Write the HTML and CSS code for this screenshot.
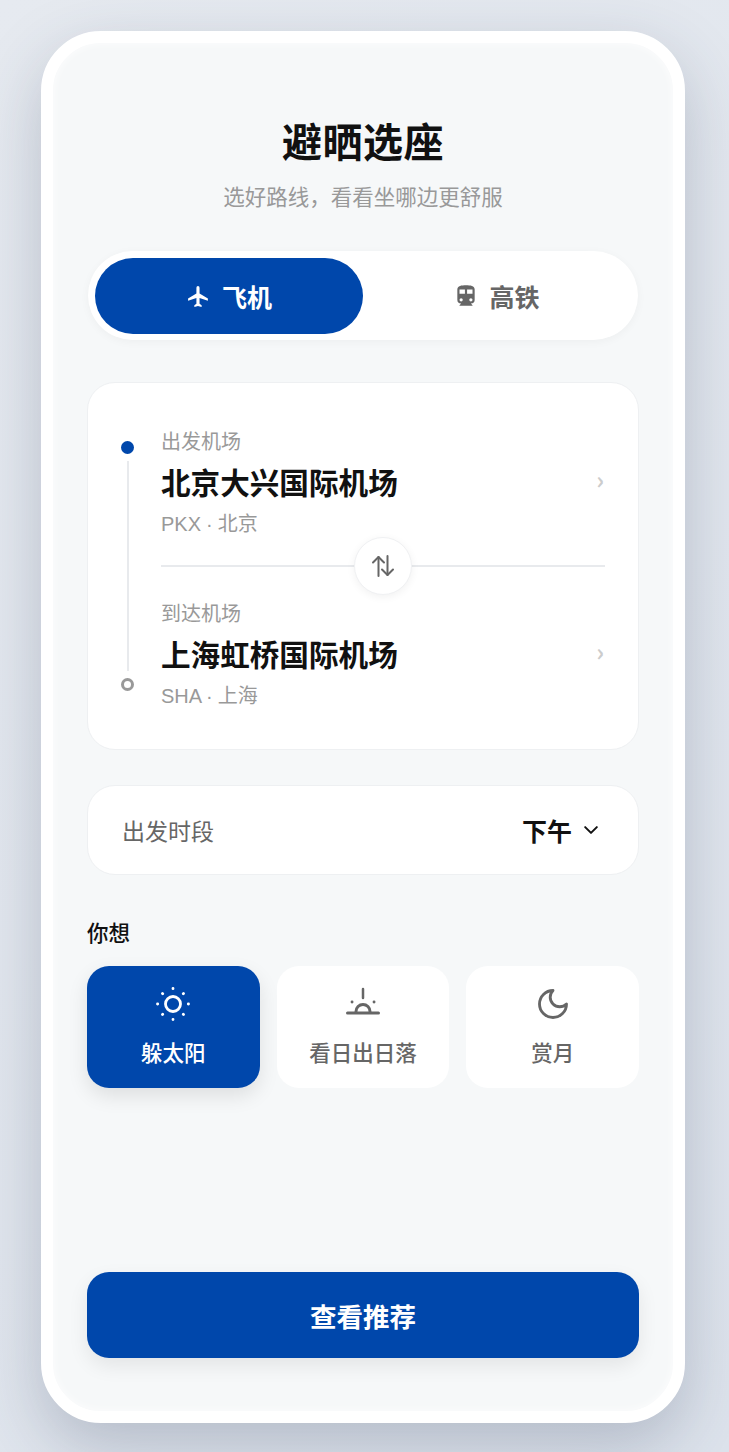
FILE: index.html
```html
<!DOCTYPE html>
<html lang="zh">
<head>
    <meta charset="UTF-8">
    <title>避晒选座</title>
    <link rel="stylesheet" href="styles.css">
</head>
<body>
    <div class="phone">
        <h1 class="title">避晒选座</h1>
        <p class="subtitle">选好路线，看看坐哪边更舒服</p>

        <div class="tabs">
            <div class="tab tab-active">
                <svg class="tab-icon" viewBox="0 0 24 24" fill="currentColor"><path d="M21 16v-2l-8-5V3.500a1.500 1.500 0 0 0-3 0V9l-8 5v2l8-2.500V19l-2 1.500V22l3.500-1 3.500 1v-1.500L13 19v-5.500z"/></svg>
                <span>飞机</span>
            </div>
            <div class="tab">
                <svg class="tab-icon tab-icon-train" viewBox="0 0 24 24" fill="currentColor"><path d="M12 2C8 2 4 2.500 4 6v9.500A3.500 3.500 0 0 0 7.500 19L6 20.500v.5h12v-.5L16.500 19a3.500 3.500 0 0 0 3.500-3.500V6c0-3.500-4-4-8-4zM7.500 17a1.500 1.500 0 1 1 0-3 1.500 1.500 0 0 1 0 3zM11 10H6V6h5zm2 0V6h5v4zm3.500 7a1.500 1.500 0 1 1 0-3 1.500 1.500 0 0 1 0 3z"/></svg>
                <span>高铁</span>
            </div>
        </div>

        <div class="route card">
            <div class="rail">
                <span class="dot dot-from"></span>
                <span class="rail-line"></span>
                <span class="dot dot-to"></span>
            </div>
            <div class="stops">
                <div class="stop">
                    <div class="stop-info">
                        <div class="stop-label">出发机场</div>
                        <div class="stop-name">北京大兴国际机场</div>
                        <div class="stop-code">PKX · 北京</div>
                    </div>
                    <span class="stop-arrow">›</span>
                </div>
                <div class="stop-divider">
                    <button class="swap">
                        <svg viewBox="0 0 24 24" fill="none" stroke="currentColor" stroke-width="2" stroke-linecap="round" stroke-linejoin="round"><path d="M7.500 22V3"/><path d="M2 8.500l5.500-5.500 5.500 5.500"/><path d="M16.500 2v19"/><path d="M11 15.500l5.500 5.500 5.500-5.500"/></svg>
                    </button>
                </div>
                <div class="stop">
                    <div class="stop-info">
                        <div class="stop-label">到达机场</div>
                        <div class="stop-name">上海虹桥国际机场</div>
                        <div class="stop-code">SHA · 上海</div>
                    </div>
                    <span class="stop-arrow">›</span>
                </div>
            </div>
        </div>

        <div class="time card">
            <span class="time-label">出发时段</span>
            <span class="time-value">下午
                <svg viewBox="0 0 24 24" fill="none" stroke="currentColor" stroke-width="2.400" stroke-linecap="round" stroke-linejoin="round"><path d="M5 8.500l7 7 7-7"/></svg>
            </span>
        </div>

        <div class="section-title">你想</div>
        <div class="options">
            <div class="option option-active">
                <svg viewBox="0 0 36 36" fill="none" stroke="currentColor" stroke-width="2.800" stroke-linecap="round"><circle cx="18" cy="18" r="7.500"/><path d="M18 2.500v.2M18 33.300v.2M2.500 18h.2M33.300 18h.2M7.500 7.500l.2.2M28.300 28.300l.2.2M7.500 28.500l.2-.2M28.300 7.700l.2-.2"/></svg>
                <span>躲太阳</span>
            </div>
            <div class="option">
                <svg viewBox="0 0 36 36" fill="none" stroke="currentColor" stroke-width="2.500" stroke-linecap="round"><path d="M18 3v9"/><path d="M2.500 27h31" stroke-width="3"/><path d="M11 25.500a7 7 0 0 1 14 0" stroke-width="3"/><path d="M7 16h.1M29 16h.1" stroke-width="2.800"/></svg>
                <span>看日出日落</span>
            </div>
            <div class="option">
                <svg viewBox="0 0 24 24" fill="none" stroke="currentColor" stroke-width="1.900" stroke-linecap="round" stroke-linejoin="round"><path d="M12 3a6 6 0 0 0 9 9 9 9 0 1 1-9-9z"/></svg>
                <span>赏月</span>
            </div>
        </div>

        <button class="submit">查看推荐</button>
    </div>
</body>
</html>
```

FILE: styles.css
```css
* {
    box-sizing: border-box;
}
body {
    margin: 0;
    height: 1452px;
    overflow: hidden;
    padding: 31px 44px 0 41px;
    background: linear-gradient(135deg, #e6eaf0, #dde3ec);
    font-family: "Liberation Sans", "Noto Sans CJK SC", sans-serif;
}
.phone {
    display: flex;
    flex-direction: column;
    width: 644px;
    height: 1392px;
    padding: 78px 34px 53px;
    background: #f6f8f9;
    border: 12px solid #fff;
    border-radius: 60px;
    box-shadow: 0 24px 64px rgba(50, 65, 90, 0.25), inset 0 0 10px rgba(255, 255, 255, 0.8);
}
.title {
    margin: 0;
    font-size: 40px;
    line-height: 44px;
    font-weight: 700;
    letter-spacing: 0.5px;
    text-align: center;
    color: #111;
}
.subtitle {
    margin: 19px 0 0;
    font-size: 21.5px;
    line-height: 28px;
    text-align: center;
    color: #999;
}
.tabs {
    display: flex;
    height: 89px;
    margin: 39px 1px 0;
    padding: 7px 7px 6px;
    background: #fff;
    border-radius: 45px;
    box-shadow: 0 2px 10px rgba(0, 0, 0, 0.04);
}
.tab {
    flex: 1;
    display: flex;
    align-items: center;
    justify-content: center;
    gap: 11px;
    border-radius: 38px;
    font-size: 25px;
    font-weight: 700;
    color: #666;
}
.tab-active {
    background: #0047ab;
    color: #fff;
}
.tab-icon {
    width: 25px;
    height: 25px;
}
.tab-icon-train {
    width: 26px;
    height: 26px;
    margin: 0 -1px;
}
.card {
    background: #fff;
    border: 1px solid #eef0f2;
    border-radius: 28px;
}
.route {
    display: flex;
    height: 368px;
    margin-top: 42px;
    padding: 44px 33px 0;
}
.rail {
    display: flex;
    flex-direction: column;
    align-items: center;
    width: 13px;
    height: 250px;
    margin-top: 14px;
    margin-right: 27px;
}
.dot {
    flex: none;
    width: 13px;
    height: 13px;
    border-radius: 50%;
}
.dot-from {
    background: #0047ab;
}
.dot-to {
    background: #fff;
    border: 3px solid #999;
}
.rail-line {
    flex: 1;
    width: 2px;
    margin: 7px 0;
    background: #e8eaed;
}
.stops {
    flex: 1;
}
.stop {
    display: flex;
    align-items: center;
    justify-content: space-between;
}
.stop-label {
    font-size: 20px;
    line-height: 30px;
    color: #999;
}
.stop-name {
    margin-top: 6px;
    font-size: 29.6px;
    line-height: 42px;
    font-weight: 700;
    color: #111;
}
.stop-code {
    margin-top: 5px;
    font-size: 20px;
    line-height: 28px;
    word-spacing: -0.5px;
    color: #999;
}
.stop-arrow {
    margin-right: 1px;
    margin-bottom: 8px;
    font-family: "Noto Sans CJK SC", sans-serif;
    font-size: 24px;
    font-weight: 700;
    color: #ccc;
}
.stop-divider {
    display: flex;
    align-items: center;
    justify-content: center;
    height: 2px;
    margin: 27px 0 32px;
    background: #e8eaed;
}
.swap {
    display: flex;
    align-items: center;
    justify-content: center;
    flex: none;
    width: 58px;
    height: 58px;
    padding: 0;
    background: #fff;
    border: 1px solid #f0f1f3;
    border-radius: 50%;
    box-shadow: 0 2px 8px rgba(0, 0, 0, 0.06);
    color: #666;
}
.swap svg {
    width: 24px;
    height: 24px;
}
.time {
    display: flex;
    align-items: center;
    justify-content: space-between;
    height: 90px;
    margin-top: 35px;
    padding: 0 37px 0 34px;
}
.time-label {
    font-size: 23px;
    color: #666;
}
.time-value {
    display: flex;
    align-items: center;
    gap: 9px;
    font-size: 25px;
    font-weight: 700;
    color: #111;
}
.time-value svg {
    width: 20px;
    height: 20px;
}
.section-title {
    margin-top: 45px;
    font-size: 21.5px;
    line-height: 28px;
    font-weight: 500;
    color: #111;
}
.options {
    display: grid;
    grid-template-columns: repeat(3, 1fr);
    gap: 17px;
    margin-top: 18px;
}
.option {
    display: flex;
    flex-direction: column;
    align-items: center;
    height: 122px;
    padding-top: 20px;
    background: #fff;
    border-radius: 22px;
    font-size: 21.5px;
    font-weight: 500;
    color: #666;
}
.option span {
    margin-top: 17px;
    line-height: 30px;
}
.option svg {
    width: 36px;
    height: 36px;
}
.option-active {
    background: #0047ab;
    color: #fff;
    box-shadow: 0 8px 20px rgba(0, 0, 0, 0.1);
}
.submit {
    height: 86px;
    margin-top: auto;
    background: #0047ab;
    border: none;
    border-radius: 22px;
    box-shadow: 0 8px 20px rgba(0, 0, 0, 0.08);
    font-family: inherit;
    font-size: 26.5px;
    font-weight: 700;
    color: #fff;
}
```
